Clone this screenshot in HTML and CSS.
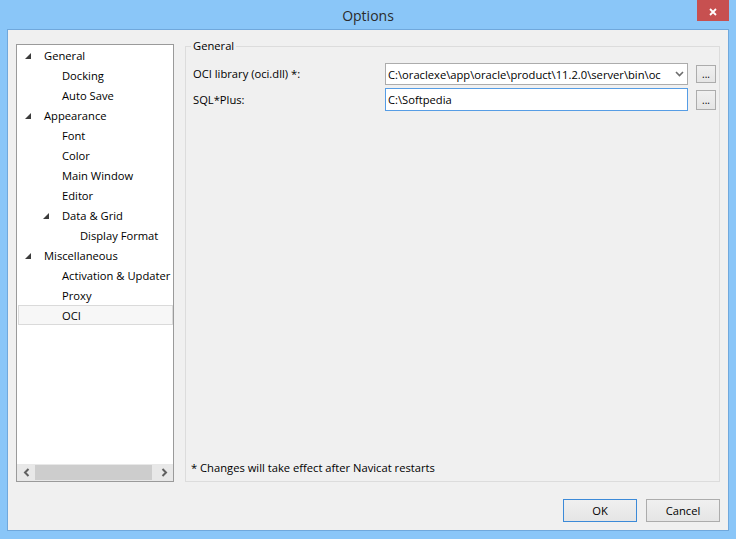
FILE: index.html
```html
<!DOCTYPE html>
<html>
<head>
<meta charset="utf-8">
<link rel="stylesheet" href="styles.css">
</head>
<body>
<div class="window">
  <div class="titlebar">
    <span class="title">Options</span>
    <div class="close">
      <svg width="8" height="8" viewBox="0 0 8 8"><path d="M1 1 L7 7 M7 1 L1 7" stroke="#fff" stroke-width="1.8" fill="none"/></svg>
    </div>
  </div>
  <div class="client">
    <div class="main">
      <div class="tree">
        <div class="tree-items">
          <div class="node l0"><span class="exp"><svg width="6" height="6" viewBox="0 0 6 6"><polygon points="6,0 6,6 0,6" fill="#3c3c3c"/></svg></span><span>General</span></div>
          <div class="node l1"><span class="exp"></span><span>Docking</span></div>
          <div class="node l1"><span class="exp"></span><span>Auto Save</span></div>
          <div class="node l0"><span class="exp"><svg width="6" height="6" viewBox="0 0 6 6"><polygon points="6,0 6,6 0,6" fill="#3c3c3c"/></svg></span><span>Appearance</span></div>
          <div class="node l1"><span class="exp"></span><span>Font</span></div>
          <div class="node l1"><span class="exp"></span><span>Color</span></div>
          <div class="node l1"><span class="exp"></span><span>Main Window</span></div>
          <div class="node l1"><span class="exp"></span><span>Editor</span></div>
          <div class="node l1"><span class="exp"><svg width="6" height="6" viewBox="0 0 6 6"><polygon points="6,0 6,6 0,6" fill="#3c3c3c"/></svg></span><span>Data &amp; Grid</span></div>
          <div class="node l2"><span class="exp"></span><span>Display Format</span></div>
          <div class="node l0"><span class="exp"><svg width="6" height="6" viewBox="0 0 6 6"><polygon points="6,0 6,6 0,6" fill="#3c3c3c"/></svg></span><span>Miscellaneous</span></div>
          <div class="node l1"><span class="exp"></span><span>Activation &amp; Updater</span></div>
          <div class="node l1"><span class="exp"></span><span>Proxy</span></div>
          <div class="node l1 sel"><span class="exp"></span><span>OCI</span></div>
        </div>
        <div class="hscroll">
          <div class="sb-btn"><svg width="7" height="9" viewBox="0 0 7 9"><path d="M5.5 1 L2 4.5 L5.5 8" stroke="#606060" stroke-width="2" fill="none"/></svg></div>
          <div class="sb-track"><div class="sb-thumb"></div></div>
          <div class="sb-btn"><svg width="7" height="9" viewBox="0 0 7 9"><path d="M1.5 1 L5 4.5 L1.5 8" stroke="#606060" stroke-width="2" fill="none"/></svg></div>
        </div>
      </div>
      <fieldset class="group">
        <legend>General</legend>
        <div class="form">
          <label class="lbl">OCI library (oci.dll) *:</label>
          <div class="combo">
            <span class="field-text">C:\oraclexe\app\oracle\product\11.2.0\server\bin\oc</span>
            <svg class="chev" width="9" height="6" viewBox="0 0 9 6"><path d="M1 1 L4.5 4.5 L8 1" stroke="#6d6d6d" stroke-width="1.6" fill="none"/></svg>
          </div>
          <div class="dots short">...</div>
          <label class="lbl">SQL*Plus:</label>
          <div class="input"><span class="field-text">C:\Softpedia</span></div>
          <div class="dots">...</div>
        </div>
        <div class="note">* Changes will take effect after Navicat restarts</div>
      </fieldset>
    </div>
    <div class="buttons">
      <div class="btn ok">OK</div>
      <div class="btn">Cancel</div>
    </div>
  </div>
</div>
</body>
</html>
```

FILE: styles.css
```css
html, body {
  margin: 0;
  padding: 0;
}
body {
  font-family: "Open Sans", "Noto Sans", sans-serif;
  font-size: 11.2px;
  color: #000;
}
.window {
  width: 736px;
  height: 539px;
  box-sizing: border-box;
  background: #8ac6f8;
  padding: 0 7px 8px 7px;
  display: flex;
  flex-direction: column;
}
.titlebar {
  height: 29px;
  flex: none;
  position: relative;
  display: flex;
  justify-content: center;
  align-items: center;
}
.title {
  font-size: 14px;
  color: #2b2b2b;
  margin-top: 1px;
}
.close {
  position: absolute;
  top: 0;
  right: 0;
  width: 32px;
  height: 21px;
  background: #c75050;
  display: flex;
  align-items: center;
  justify-content: center;
}
.close svg {
  margin-top: 2px;
}
.client {
  flex: 1;
  min-height: 0;
  background: #f0f0f0;
  border: 1px solid #70a8dc;
  display: flex;
  flex-direction: column;
  padding: 8px;
}
.main {
  flex: 1;
  min-height: 0;
  display: flex;
  gap: 11px;
}
.tree {
  width: 158px;
  flex: none;
  box-sizing: border-box;
  margin-top: 6px;
  border: 1px solid #9a9a9a;
  background: #fff;
  display: flex;
  flex-direction: column;
}
.tree-items {
  flex: 1;
  overflow: hidden;
  padding-top: 0;
}
.node {
  height: 20px;
  box-sizing: border-box;
  display: flex;
  align-items: center;
  white-space: nowrap;
}
.node.l0 { padding-left: 8px; }
.node.l1 { padding-left: 26px; }
.node.l2 { padding-left: 44px; }
.node.sel {
  background: #f7f7f7;
  border: 1px solid #dadada;
  margin-left: 1px;
  padding-left: 24px;
}
.exp {
  width: 19px;
  flex: none;
  display: flex;
  align-items: center;
}
.exp svg {
  display: block;
  margin-top: 1px;
}
.hscroll {
  height: 17px;
  flex: none;
  background: #e8e8e8;
  display: flex;
  align-items: stretch;
}
.sb-btn {
  width: 18px;
  flex: none;
  display: flex;
  align-items: center;
  justify-content: center;
}
.sb-track {
  flex: 1;
  display: flex;
  align-items: center;
}
.sb-thumb {
  width: 117px;
  height: 15px;
  background: #cdcdcd;
}
.group {
  flex: 1;
  min-width: 0;
  margin: 0;
  padding: 0 7px 5px 7px;
  border: 1px solid #dcdcdc;
  display: flex;
  flex-direction: column;
}
.group legend {
  margin-left: -2px;
  padding: 0 2px;
  line-height: 16px;
}
.form {
  margin-top: 9px;
  display: grid;
  grid-template-columns: 192px 303px 20px;
  grid-template-rows: 22px 23px;
  column-gap: 4px;
  row-gap: 3px;
  align-items: center;
}
.form .lbl {
  grid-column: 1;
  margin-top: -1px;
}
.combo, .input {
  height: 100%;
  box-sizing: border-box;
  background: #fff;
  display: flex;
  align-items: center;
  overflow: hidden;
  margin-left: -4px;
  width: 303px;
}
.combo {
  border: 1px solid #acacac;
}
.input {
  border: 1px solid #569de5;
}
.field-text {
  flex: 1;
  min-width: 0;
  overflow: hidden;
  white-space: nowrap;
  padding-left: 2px;
}
.chev {
  flex: none;
  margin: 0 3px 0 4px;
}
.dots {
  width: 20px;
  height: 20px;
  box-sizing: border-box;
  border: 1px solid #acacac;
  background: linear-gradient(#f0f0f0, #e5e5e5);
  font-size: 10px;
  line-height: 18px;
  text-align: center;
  letter-spacing: 0;
}
.dots.short {
  height: 18px;
  line-height: 16px;
}
.note {
  margin-top: auto;
  margin-left: -2px;
  line-height: 16px;
}
.buttons {
  flex: none;
  display: flex;
  justify-content: flex-end;
  gap: 9px;
  margin-top: 17px;
}
.btn {
  width: 74px;
  height: 23px;
  box-sizing: border-box;
  border: 1px solid #acacac;
  background: linear-gradient(#f0f0f0, #e5e5e5);
  display: flex;
  align-items: center;
  justify-content: center;
}
.btn.ok {
  border-color: #3c8ad8;
}
```
